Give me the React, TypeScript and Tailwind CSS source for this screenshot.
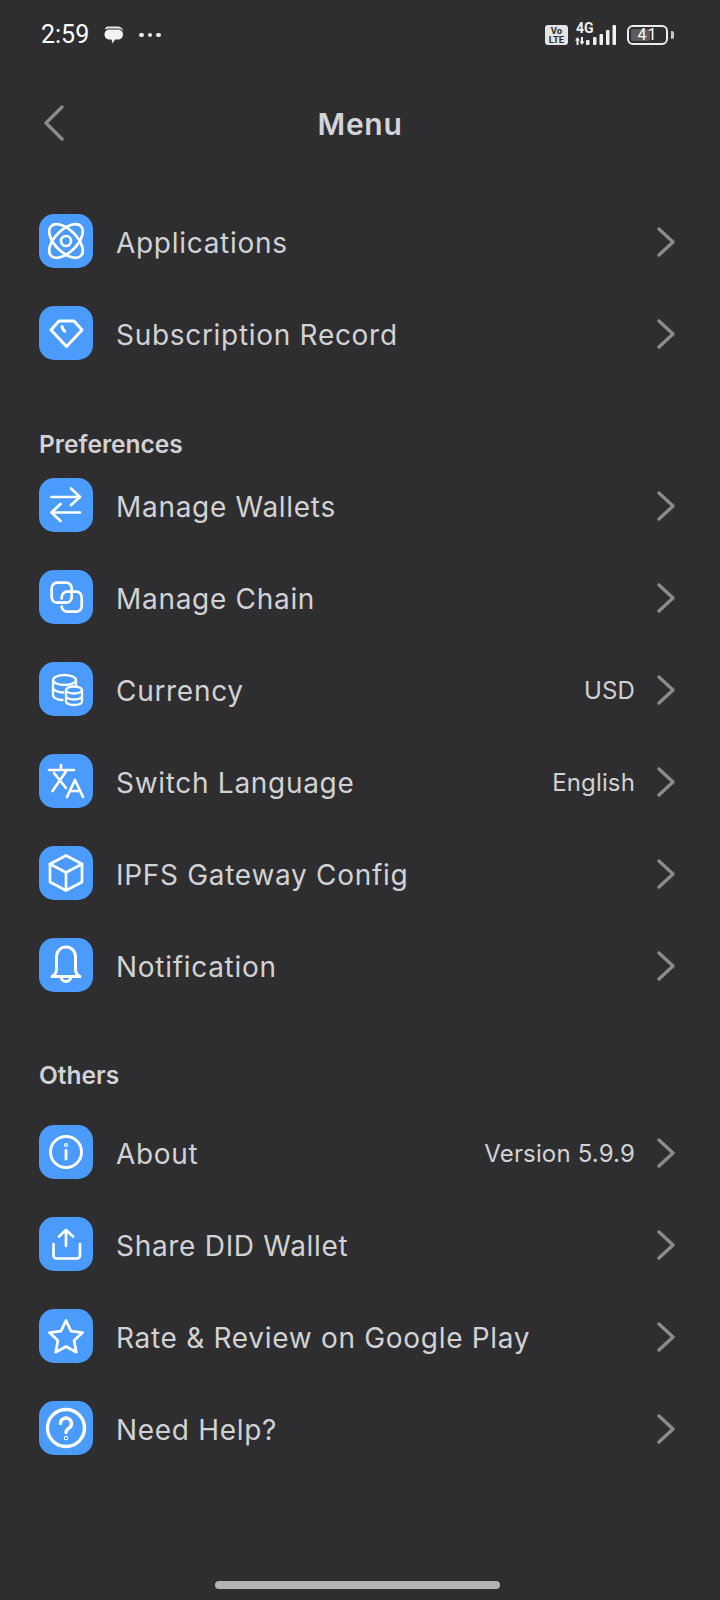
import type { ReactNode } from "react";

type Row = {
  key: string;
  label: string;
  value?: string;
  icon: ReactNode;
};

// All menu glyphs share a 54 unit box so they sit in the tile without scaling.
function Glyph({ children, width = 2.7 }: { children: ReactNode; width?: number }) {
  return (
    <svg viewBox="0 0 54 54" className="h-[54px] w-[54px]" fill="none" stroke="#fff" strokeWidth={width} strokeLinecap="round" strokeLinejoin="round">
      {children}
    </svg>
  );
}

const topRows: Row[] = [
  {
    key: "apps",
    label: "Applications",
    icon: (
      <Glyph>
        <ellipse cx="27" cy="27" rx="21" ry="11" transform="rotate(45 27 27)" />
        <ellipse cx="27" cy="27" rx="21" ry="11" transform="rotate(-45 27 27)" />
        <circle cx="27" cy="27" r="5" />
      </Glyph>
    ),
  },
  {
    key: "subscription",
    label: "Subscription Record",
    icon: (
      <Glyph width={3}>
        <path d="M20 15h15l8 9-15.500 16.500L12 24z" />
        <path d="M23 20.500c.2 2 1.200 3.600 2.800 4.800" />
      </Glyph>
    ),
  },
];

const preferenceRows: Row[] = [
  {
    key: "wallets",
    label: "Manage Wallets",
    icon: (
      <Glyph>
        <path d="M12.500 19H41M32 10.500 41 19l-9 8" />
        <path d="M41 34.500H12.500M21.500 26l-9 8.500 9 8.500" />
      </Glyph>
    ),
  },
  {
    key: "chain",
    label: "Manage Chain",
    icon: (
      <Glyph>
        <rect x="12.700" y="12.700" width="20" height="20" rx="5.500" />
        <rect x="22.700" y="21.700" width="20" height="20" rx="5.500" />
        {/* the links pass over and under each other at the lower crossing */}
        <path d="M22.700 29.500v6" stroke="#4a9bfb" strokeWidth="4" strokeLinecap="butt" />
        <path d="M20 32.700h6" />
      </Glyph>
    ),
  },
  {
    key: "currency",
    label: "Currency",
    value: "USD",
    icon: (
      <Glyph width={2.3}>
        <ellipse cx="25.500" cy="18" rx="11.500" ry="5" />
        <path d="M14 18v15c0 2.700 4 4.800 9.500 5M14 25.500c0 2.700 4.500 5 10.500 5M37 18v6" />
        <ellipse cx="35" cy="28" rx="8" ry="3.500" />
        <path d="M27 28v11.500c0 2 3.600 3.500 8 3.500s8-1.500 8-3.500V28M27 34c0 2 3.600 3.500 8 3.500s8-1.500 8-3.500" />
      </Glyph>
    ),
  },
  {
    key: "language",
    label: "Switch Language",
    value: "English",
    icon: (
      <Glyph>
        <path d="M10 16h25M22 11v5M15 19l12 15M27 17.500 13.500 37" />
        <path d="m28 43 8-17 8 17M31 37h10" />
      </Glyph>
    ),
  },
  {
    key: "ipfs",
    label: "IPFS Gateway Config",
    icon: (
      <Glyph>
        <path d="M27 9.500 43 18v18l-16 8.500L11 36V18z" />
        <path d="M11 18l16 8.500L43 18M27 26.500v18" />
      </Glyph>
    ),
  },
  {
    key: "notification",
    label: "Notification",
    icon: (
      <Glyph width={3}>
        <path d="M13 38.500c3-1.500 4.500-3.500 4.500-7V18.500a9.500 9.500 0 0 1 19 0v13c0 3.500 1.500 5.500 4.500 7z" />
        <path d="M22 38.500a5 5 0 0 0 10 0" />
      </Glyph>
    ),
  },
];

const otherRows: Row[] = [
  {
    key: "about",
    label: "About",
    value: "Version 5.9.9",
    icon: (
      <Glyph width={2.9}>
        <circle cx="27" cy="27" r="15.500" />
        <path d="M27 25.500V34" />
        <circle cx="27" cy="20" r="0.600" />
      </Glyph>
    ),
  },
  {
    key: "share",
    label: "Share DID Wallet",
    icon: (
      <Glyph>
        <path d="M27 13v16M20 19.500l7-6.500 7 6.500" />
        <path d="M14.500 27v11.500a3 3 0 0 0 3 3h20.500a3 3 0 0 0 3-3V27" />
      </Glyph>
    ),
  },
  {
    key: "rate",
    label: "Rate & Review on Google Play",
    icon: (
      <Glyph>
        <path d="M27 11.500 32 22.100l11.600 1.500-8.500 8 2.200 11.600L27 37.500l-10.300 5.700 2.200-11.600-8.500-8L22 22.100z" />
      </Glyph>
    ),
  },
  {
    key: "help",
    label: "Need Help?",
    icon: (
      <Glyph width={3.4}>
        <circle cx="27" cy="27" r="18.500" />
        <path d="M21.500 22.500a5.500 5.500 0 1 1 8.500 4.600c-2 1.300-3 2.300-3 4.400" />
        <circle cx="27" cy="37" r="0.500" />
      </Glyph>
    ),
  },
];

function MenuRow({ row }: { row: Row }) {
  return (
    <div className="flex h-[92px] items-center pl-[39px] pr-[45px]">
      <div className="h-[54px] w-[54px] shrink-0 rounded-[15px] bg-[#4a9bfb]">{row.icon}</div>
      <span className="ml-[23px] flex-1 pt-[3px] text-[28px] tracking-[0.7px] text-[#d2d2d4]">{row.label}</span>
      {row.value && <span className="mr-[22px] pt-[3px] text-[24px] tracking-[0.15px] text-[#d2d2d4]">{row.value}</span>}
      <svg viewBox="0 0 18 30" className="mt-[1px] h-[30px] w-[18px]" fill="none" stroke="#8b8b8d" strokeWidth="3.400" strokeLinecap="round" strokeLinejoin="round">
        <path d="M2 2l14 13L2 28" />
      </svg>
    </div>
  );
}

function StatusBar() {
  return (
    <div className="flex h-[70px] items-center pl-[41px] pr-[46px] text-white">
      <span className="font-['Roboto',sans-serif] text-[25px]">2:59</span>
      <svg viewBox="0 0 20 20" className="ml-[15px] h-[20px] w-[20px]">
        <path d="M4 1.500h9c3.500 0 6 2 6.500 5-1-2-3-3-6-3H5C3 3.500 1.500 4 .8 5 1 3 2.200 1.500 4 1.500z" fill="#e8e8e8" />
        <path d="M5 4.500h8.500c3.300 0 5.500 2 5.500 5s-2.200 5-5.500 5H11l-2.500 4-1-4H6c-3.300 0-5.500-2-5.500-5s1.800-5 4.500-5z" fill="#f2f2f2" />
      </svg>
      <div className="ml-[15px] flex gap-[4px]">
        <span className="h-[4.500px] w-[4.500px] rounded-full bg-[#e8e8e8]" />
        <span className="h-[4.500px] w-[4.500px] rounded-full bg-[#e8e8e8]" />
        <span className="h-[4.500px] w-[4.500px] rounded-full bg-[#e8e8e8]" />
      </div>
      <div className="ml-auto flex items-center">
        <div className="flex h-[20px] w-[23px] flex-col items-center justify-center rounded-[3px] bg-[#e4e4e4] font-['Roboto',sans-serif] text-[9.500px] leading-[9px] font-bold text-[#2e2e30]">
          <span>Vo</span>
          <span>LTE</span>
        </div>
        <div className="relative ml-[6px] h-[22px] w-[46px]">
          <span className="absolute left-[2px] top-[-3px] font-['Roboto',sans-serif] text-[14px] leading-[14px] font-bold text-[#f0f0f0]">4G</span>
          <svg viewBox="0 0 46 22" className="h-[22px] w-[46px]" fill="#f0f0f0">
            <path d="M3.500 13 6 16.500H4.500V21h-2v-4.500H1zM7 13h2v4.500h1.500L8 21l-2.500-3.500H7z" />
            <rect x="12" y="16" width="3.500" height="5" rx="1" />
            <rect x="19" y="13" width="3.500" height="8" rx="1" />
            <rect x="25.500" y="10" width="3.500" height="11" rx="1" />
            <rect x="32" y="6" width="3.500" height="15" rx="1" />
            <rect x="38.500" y="1" width="3.500" height="20" rx="1" />
          </svg>
        </div>
        <div className="relative ml-[7px] flex h-[20px] w-[41px] items-center justify-center rounded-[6px] border-2 border-[#ececec] font-['Roboto',sans-serif] text-[16px] leading-[16px] text-white">
          <div className="absolute inset-y-[2px] left-[2px] w-[50%] rounded-[2px] bg-[#5c5c5e]" />
          <span className="relative tracking-[1px]">41</span>
        </div>
        <div className="ml-[3px] h-[8px] w-[3px] rounded-r-[2px] bg-[#c8c8c8]" />
      </div>
    </div>
  );
}

export default function App() {
  return (
    <div className="flex min-h-[1600px] flex-col bg-[#2e2e30] font-['Inter',sans-serif]">
      <StatusBar />

      <div className="relative flex h-[106px] items-center justify-center">
        <svg viewBox="0 0 22 36" className="absolute left-[43px] top-[35px] h-[36px] w-[22px]" fill="none" stroke="#8b8b8d" strokeWidth="3.400" strokeLinecap="round" strokeLinejoin="round">
          <path d="M19 2 3 18l16 16" />
        </svg>
        <h1 className="pt-[3px] text-[30px] font-semibold tracking-[0.7px] text-[#d4d4d6]">Menu</h1>
      </div>

      <div className="mt-[19px]">
        {topRows.map((row) => (
          <MenuRow key={row.key} row={row} />
        ))}
      </div>

      <h2 className="mt-[50px] pl-[39px] text-[24.500px] leading-[30px] font-semibold text-[#d2d2d4]">Preferences</h2>
      <div>
        {preferenceRows.map((row) => (
          <MenuRow key={row.key} row={row} />
        ))}
      </div>

      <h2 className="mt-[49px] mb-[16px] pl-[39px] text-[24.500px] leading-[30px] font-semibold text-[#d2d2d4]">Others</h2>
      <div>
        {otherRows.map((row) => (
          <MenuRow key={row.key} row={row} />
        ))}
      </div>

      {/* gesture bar */}
      <div className="mt-auto mb-[11px] ml-[215px] h-[8px] w-[285px] rounded-full bg-[#b4b4b4]" />
    </div>
  );
}
